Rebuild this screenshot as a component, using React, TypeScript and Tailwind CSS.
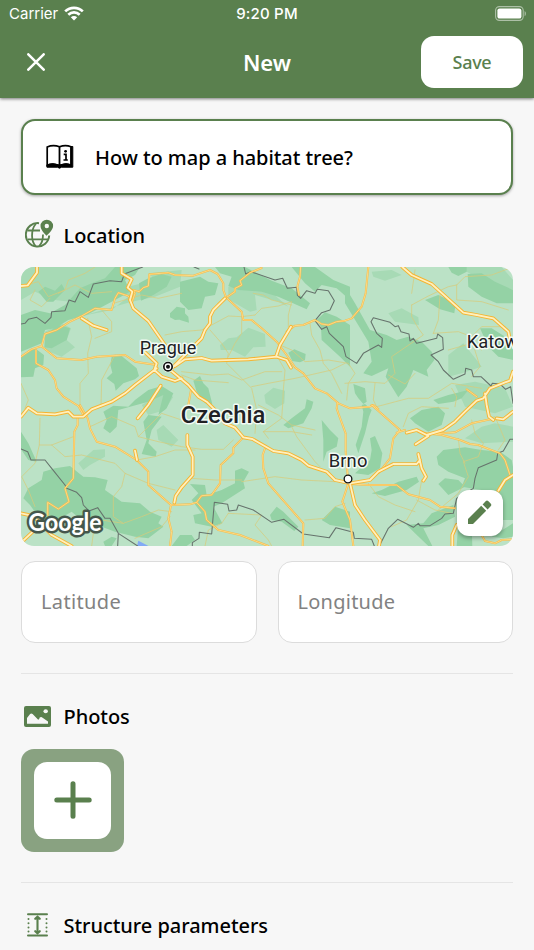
import React from 'react';

const FORESTS_LIGHT = [
  'M18 21L330 21L290 70L235 72L200 95L165 125L120 120L60 95L18 120Z',
  'M200 168L290 150L340 110L300 90L420 60L400 40L500 30L495 80L420 110L350 125Z',
  'M90 215L140 190L168 205L155 240L180 262L140 290L90 270Z',
  'M190 610L235 570L270 568L270 590L225 615L205 630Z',
  'M615 255L640 235L665 232L700 203L750 222L752 260L715 262L690 290L650 270L617 270Z',
  'M640 80L700 75L760 90L820 140L790 125L720 105L725 150L705 155L640 118Z',
  'M748 405L775 383L810 392L808 430L780 447L752 430Z',
  'M1070 35L1130 30L1160 45L1110 62L1075 50Z',
  'M1300 285L1345 250L1385 300L1400 320L1340 340L1300 350Z',
  'M1120 160L1160 145L1210 172L1212 195L1140 185Z',
  'M1320 375L1380 365L1470 385L1494 440L1440 460L1350 440Z',
  'M1350 535L1400 500L1440 490L1494 500L1494 545L1400 550Z',
  'M1330 21L1460 21L1494 60L1494 90L1400 60Z',
  'M425 510L445 495L490 540L470 560L430 540Z',
  'M380 435L440 400L475 410L450 450L400 465Z',
];

const FORESTS = [
  'M18 165L60 150L105 160L150 135L195 85L230 70L270 55L300 21L375 21L360 45L330 60L345 95L300 120L215 165L160 180L120 205L90 210L80 250L18 275Z',
  'M70 95L90 80L120 92L140 72L150 90L115 125L95 125Z',
  'M90 225L130 195L165 205L155 240L110 265L88 262Z',
  'M18 290L60 265L87 285L85 315L60 325L55 350L18 352Z',
  'M290 290L320 288L365 325L372 348L360 358L325 370L302 392L298 372L275 355L292 338L286 315Z',
  'M372 70L400 55L440 42L470 50L455 80L415 105L378 122Z',
  'M465 160L485 140L510 145L510 178L480 180L465 172Z',
  'M265 455L295 437L340 440L360 420L400 390L440 378L475 400L455 445L430 465L445 405L400 425L345 440L310 450L305 500L285 520L265 505L275 480Z',
  'M385 485L400 465L440 470L410 510L400 550L425 575L422 590L380 582L395 540Z',
  'M495 65L555 50L580 65L610 70L600 105L570 110L560 145L520 150L495 125Z',
  'M495 145L520 170L522 188L495 180Z',
  'M600 21L690 21L770 62L830 85L885 130L875 148L790 110L740 95L670 90L640 78L650 50L615 40Z',
  'M830 21L900 21L955 60L1005 80L1005 120L965 85L920 75L900 95L870 70Z',
  'M905 180L930 157L965 170L1005 195L1005 320L975 290L920 240L918 200Z',
  'M820 278L838 268L872 282L870 300L855 307L832 303Z',
  'M535 362L555 348L565 370L580 385L592 433L570 430L545 395Z',
  'M875 418L895 425L890 445L865 490L820 505L805 495L830 475L870 445Z',
  'M920 480L945 510L970 535L965 560L935 575L925 605L925 540Z',
  'M990 80L1020 130L1065 210L1115 225L1145 240L1180 230L1220 245L1250 275L1258 300L1235 330L1240 350L1195 330L1175 380L1150 412L1112 350L1120 325L1070 348L1045 340L1070 305L1060 245L990 130Z',
  'M1230 120L1270 105L1322 130L1318 160L1275 148Z',
  'M1300 21L1355 21L1355 35L1330 48L1310 38Z',
  'M1358 42L1400 40L1440 65L1494 90L1494 130L1445 130L1400 110L1360 80Z',
  'M1395 205L1430 205L1494 245L1494 300L1450 290L1420 260Z',
  'M1015 372L1050 385L1055 425L1045 432L1030 415L1020 400Z',
  'M1040 435L1050 432L1070 450L1062 470L1050 520L1030 580L1022 555L1040 500L1045 455Z',
  'M1065 535L1080 528L1102 580L1095 625L1060 645L1020 640L1065 600L1070 570Z',
  'M1185 475L1220 450L1270 440L1290 460L1280 495L1240 515L1200 490Z',
  'M1255 420L1300 405L1360 390L1340 415L1315 425L1270 432Z',
  'M1265 590L1285 570L1350 562L1400 570L1455 575L1490 600L1494 620L1494 780L1410 780L1400 690L1340 680L1350 655L1300 635L1270 615Z',
  'M1270 672L1290 655L1330 660L1350 680L1300 705Z',
  'M1070 700L1100 690L1150 665L1205 650L1212 665L1175 690L1110 708Z',
  'M1175 795L1225 790L1250 760L1315 735L1320 770L1270 795L1225 805L1252 858L1240 858L1200 820Z',
  'M1330 790L1370 790L1372 858L1325 858Z',
  'M1430 830L1494 790L1494 830L1465 835Z',
  'M18 515L40 550L65 605L40 600L18 568Z',
  'M40 685L80 660L85 635L120 625L165 618L205 650L240 652L278 660L270 690L320 725L375 730L405 755L440 770L430 790L445 800L400 835L360 830L300 815L260 800L210 790L170 755L110 790L70 770L45 735L25 715Z',
  'M265 845L290 830L305 835L290 858L270 858Z',
  'M660 632L680 625L702 635L685 665L690 685L620 730L595 740L622 790L590 800L540 790L535 765L560 760L530 720L550 700L525 672L570 675L575 705L620 690L660 670Z',
  'M765 765L785 740L805 755L850 800L838 813L800 785L770 780Z',
  'M920 780L960 740L1005 755L1005 805L945 795Z',
  'M495 825L530 825L540 840L515 858L470 858Z',
];

const MINOR_ROADS = [
  'M18 80L70 65L100 110L150 90L160 60L210 40L240 21',
  'M60 90L45 120L80 140L105 115',
  'M130 100L180 75L230 100L290 95',
  'M218 175L230 230L218 280L220 340L195 370L195 440',
  'M260 150L290 185L290 215L240 235',
  'M295 130L380 105L430 115L500 100',
  'M300 285L260 360L258 440',
  'M18 370L40 420L30 445',
  'M75 475L73 555L110 555L150 590L200 585L300 610L330 640L400 670L480 690',
  'M73 555L60 610L20 650L40 690L60 740',
  'M175 530L110 555M330 640L320 680L295 710L295 770L325 790',
  'M225 500L290 470L360 500L370 530L430 545L500 560L560 568L625 568L655 540',
  'M370 530L440 460L500 480M366 600L420 590L480 570L540 570',
  'M450 225L500 215L560 210L590 195L640 168L680 170L720 165',
  'M585 210L620 250L640 280L635 310L680 355L710 385L725 450L720 520',
  'M680 170L680 220L660 250L640 290',
  'M500 335L590 345L640 342L680 360L750 335L800 335',
  'M500 345L540 360L640 368M710 380L760 370L840 355L950 330L990 310',
  'M790 295L810 330L805 390L803 435L800 475L745 515L760 535',
  'M795 255L830 270L870 305L940 300L1000 310L1020 340L1000 370L995 420',
  'M720 165L740 145L790 138L830 125L820 165L820 200',
  'M715 100L745 105L770 120L830 135M885 190L890 225L915 270L925 310L950 340L980 400',
  'M745 515L830 515L890 525M830 500L845 530L900 605L915 620',
  'M680 665L780 650L860 660L960 665',
  'M730 435L790 465L830 495L900 510M530 655L600 660L680 660',
  'M640 760L620 790L580 810L570 858M640 760L740 765L720 795L760 840L770 858',
  'M870 780L930 775L960 740L990 730',
  'M1190 135L1190 170L1210 205L1225 225L1130 290L1140 340L1110 370L1050 365L990 370',
  'M1190 135L1240 108L1300 80L1325 75L1350 50L1430 45L1494 21',
  'M1325 75L1325 120L1400 125L1480 150',
  'M1200 30L1190 100M1275 105L1270 180L1255 220M1255 220L1330 215L1370 230L1400 200L1470 200',
  'M1300 270L1370 250L1400 270M1370 240L1395 320L1370 350',
  'M1120 345L1170 372L1200 340M1080 370L1075 420L1085 440L1180 415L1240 415L1310 370L1400 385',
  'M1165 500L1180 460L1220 440L1300 445M1320 440L1325 410L1310 385',
  'M1370 480L1380 520L1405 550L1390 590L1345 605L1360 650L1330 700L1270 750',
  'M1220 660L1210 720L1175 780L1130 800M1205 720L1260 750L1310 760M1060 670L1090 710L1140 735L1200 755',
  'M1330 535L1335 580L1350 610M1410 480L1440 470L1470 540L1450 570',
  'M260 780L325 790L380 770L430 750L470 755M360 835L440 800L465 770',
  'M215 790L235 820L230 858',
];

const MEDIUM_ROADS = [
  'M18 290L50 268L80 258L90 222L125 210L165 185L200 168L240 145L290 150L300 115L310 98L340 108L352 125',
  'M78 258L125 295L200 300L245 290L330 285L360 305L420 314',
  'M63 270L63 310L100 330L120 360L125 385L145 410L190 438L205 465',
  'M350 130L360 100L355 90L372 95L385 83L400 78L403 43L460 38L480 45L535 47L585 30L608 42L625 70L625 90L633 112L680 155L685 180L710 180L740 205L785 245L815 285L840 322L865 340L900 385L935 400L970 430L1005 445L1065 440L1075 435L1090 447',
  'M635 112L660 95L660 85L680 75L675 62L705 38L740 24',
  'M815 215L840 197L865 195L900 180L920 192L940 195L965 185L990 182L1010 175L1040 140L1052 100L1060 21',
  'M857 21L855 50L847 80L852 105',
  'M188 470L188 495L178 515L175 655L150 685L162 725L130 747L98 727L98 765',
  'M195 435L218 475L225 505L245 545L300 560L365 600L400 635L400 675L468 735L525 733L545 727L560 707L590 705L615 670L617 615L655 580L655 563L685 532',
  'M468 735L460 775L470 815L465 858',
  'M750 565L743 585L745 625L760 670L865 790L863 858',
  'M545 727L570 755L575 780L610 810L675 825L760 858',
  'M967 430L965 445L970 460L992 520L992 575L1000 670L982 725L1005 780L1015 858',
  'M1070 435L1155 510L1135 535L1125 595L1092 638M1145 518L1170 510',
  'M1005 672L1060 675L1145 675L1180 703L1245 720L1275 740L1320 745',
  'M1230 520L1280 525L1335 540L1365 552L1390 555L1455 580L1470 600L1485 645',
  'M1240 523L1320 517L1370 490L1430 477',
  'M1355 388L1385 410M520 435L528 390',
  'M1400 825L1410 843L1440 850L1460 840L1494 838',
];

const MAJOR_ROADS = [
  'M18 78L38 76L66 38L66 21',
  'M320 21L320 40L350 58L338 83L352 95L345 120L355 145L400 183L450 255L475 290',
  'M425 325L360 375L330 400L290 425L230 448L205 470L175 470L160 455L120 463L65 460L40 443L18 470',
  'M388 275L425 310L418 330L440 350L480 363L500 355',
  'M470 325L520 275L560 235L570 210L585 190L585 170L595 150L630 115',
  'M480 318L510 298L560 294L590 302L700 298L785 290L815 300L828 323M783 290L795 255L828 200',
  'M460 325L520 375L550 410L575 425L605 455L630 490L660 503L685 532L712 537L775 573L820 580L860 600L880 617L935 635L960 660L1005 670L1065 660L1090 635L1135 612L1205 612L1215 600',
  'M1005 670L1020 735L1050 780L1095 840L1092 858',
  'M1210 582L1220 625L1233 650L1225 662',
  'M1175 518L1205 510L1235 525L1285 510L1320 485L1350 455L1385 422L1405 415L1425 385L1470 367L1485 362L1494 335',
  'M1202 553L1240 528',
  'M1162 21L1190 45L1250 72L1345 158L1385 165L1435 175L1480 215L1485 240',
  'M1410 400L1415 435L1422 470L1435 480M1445 475L1465 478L1494 455',
  'M18 760L55 768L110 825L170 858M18 848L75 795',
  'M478 728L482 708L500 682L533 645L533 590L517 555L517 525',
  'M200 175L235 197L275 210',
  'M437 377L400 435L368 475',
  'M360 572L366 600',
  'M1494 645L1470 660L1450 692M1325 795L1312 825L1312 858',
];

const BORDERS = [
  'M18 192L30 190L40 178L65 172L90 190L108 172L110 155L150 152L162 120L180 126L195 95L220 112L235 72L285 62L320 65L328 42L383 21',
  'M537 21L552 27M687 21L692 42L707 35L780 60L803 55L817 85L845 82L847 105L857 115L875 92L900 100L907 88L940 92L958 122L945 150L920 158L900 182L920 208L935 200L943 220L985 260L993 290L1025 310L1045 280L1090 255L1100 262L1102 235L1085 220L1068 185L1075 173L1125 187L1140 200L1150 197L1158 215L1182 222L1185 243L1195 235L1205 250L1265 235L1268 222L1283 233L1285 268L1248 285L1270 305L1285 330L1315 358L1350 342L1352 325L1370 330L1375 350L1398 350L1428 378L1432 370L1455 372L1472 388L1487 380L1494 430',
  'M18 567L38 575L48 600L90 600L110 625L150 675L155 685L185 697L200 713L205 735L222 753L248 743L270 775L285 775L310 820L368 858M310 820L308 858',
  'M532 858L532 848L552 835L553 817L590 822L598 727L638 733L642 753L665 750L670 735L715 750L770 787L807 778L865 822L943 833L963 803L1015 817L1018 835L1070 838L1078 858',
  'M1093 858L1120 805L1148 778L1195 802L1210 790L1215 797L1245 797L1280 775L1290 762L1315 760L1325 715L1375 685L1380 655L1390 623L1445 600L1448 580L1465 573L1485 538L1494 538',
];

const MAP_LABEL = 'fill-[#202124] stroke-[#f3fbf5] [stroke-linejoin:round] [paint-order:stroke]';

const CzechiaMap: React.FC = () => (
  <svg className="block h-full w-full" viewBox="18 21 1476 837" preserveAspectRatio="none" fill="none">
    <rect x="18" y="21" width="1476" height="837" fill="#bbe2c6" />
    <path d={FORESTS_LIGHT.join('')} fill="#a7dab5" />
    <path d={FORESTS.join('')} fill="#94d2a5" />
    <path d="M366 858L370 842L395 855L400 858Z" fill="#82aaf5" />
    <g strokeLinejoin="round" strokeLinecap="round">
      <path d={MINOR_ROADS.join('')} stroke="#d8cb7b" strokeWidth="2.6" opacity="0.85" />
      <path d={BORDERS.join('')} stroke="#66736c" strokeWidth="3.2" />
      <path d={MEDIUM_ROADS.join('')} stroke="#f3bd50" strokeWidth="6" />
      <path d={MEDIUM_ROADS.join('')} stroke="#ffdf8c" strokeWidth="2.5" />
      <path d={MAJOR_ROADS.join('')} stroke="#f5b432" strokeWidth="11" />
      <path d={MAJOR_ROADS.join('')} stroke="#fff0bd" strokeWidth="5.5" />
    </g>

    {/* City markers */}
    <circle cx="459" cy="320" r="17" fill="#e6f5ea" />
    <circle cx="459" cy="320" r="12.5" fill="#fff" stroke="#111" strokeWidth="5" />
    <circle cx="459" cy="320" r="6" fill="#111" />
    <circle cx="999" cy="657" r="11.5" fill="#fff" stroke="#111" strokeWidth="4" />

    <g fontFamily="Roboto, sans-serif" strokeWidth="9">
      <text className={MAP_LABEL} x="374" y="281" fontSize="54" textLength="170">Prague</text>
      <text className={MAP_LABEL} x="497" y="489" fontSize="71" fontWeight="500" textLength="254" lengthAdjust="spacingAndGlyphs">Czechia</text>
      <text className={MAP_LABEL} x="941" y="620" fontSize="55" textLength="116">Brno</text>
      <text className={MAP_LABEL} x="1355" y="265" fontSize="55">Katowice</text>
    </g>
    <text
      x="40" y="813" fontSize="73" fontWeight="700" fontFamily="Lato, sans-serif" textLength="220" lengthAdjust="spacingAndGlyphs"
      className="fill-white stroke-[#45574b] [stroke-linejoin:round] [paint-order:stroke]" strokeWidth="15"
    >
      Google
    </text>
  </svg>
);

const WifiIcon = () => (
  <svg className="h-[15px] w-5" viewBox="0 0 20 15" fill="none" stroke="#fff" strokeWidth="2.7">
    <path d="M1.2 5.4C6.2 .6 13.8 .6 18.8 5.4" />
    <path d="M4.3 8.7C7.6 5.6 12.4 5.6 15.7 8.7" />
    <path d="M6.8 11.2C8.7 9.5 11.3 9.5 13.2 11.2L10 14.5Z" fill="#fff" stroke="none" />
  </svg>
);

const BatteryIcon = () => (
  <svg className="h-[15px] w-8" viewBox="0 0 32 15" fill="none">
    <rect x=".6" y=".6" width="27.6" height="13.8" rx="3.8" stroke="#fff" strokeOpacity=".5" strokeWidth="1.1" />
    <rect x="2.4" y="2.4" width="24" height="10.2" rx="2.2" fill="#fff" />
    <path d="M29.6 5V10.2C31.3 9.5 31.3 5.7 29.6 5Z" fill="#fff" fillOpacity=".5" />
  </svg>
);

const GuideIcon = () => (
  <svg className="h-[26px] w-7" viewBox="0 0 28 26" fill="none" stroke="#000">
    <path d="M1.2 3Q7 .6 13.5 2.7Q19.5 .6 25 2.7V21.2Q19.5 18.7 13.5 22Q7 18.7 1.2 21.2Z" strokeWidth="1.7" />
    <path d="M13.5 2.5V22" strokeWidth="1.8" />
    <path d="M25 2.5H26.8V23.2H15.5Q13.5 25.2 11.5 23.2H.9V20.8Q7 18.6 13.5 21Q20 18.6 25 20.8Z" fill="#000" strokeWidth="1" />
    <circle cx="19.6" cy="7.3" r="1.4" fill="#000" stroke="none" />
    <path d="M17.7 10.3H20V15.6M17.5 16H21.8" strokeWidth="1.7" />
  </svg>
);

const GlobePinIcon = () => (
  <svg className="h-[30px] w-[30px]" viewBox="0 0 30 30" fill="none" stroke="#5a804e" strokeWidth="1.8">
    <path d="M14 4.2A11.7 11.7 0 1 0 24.2 16.5" strokeWidth="2" />
    <path d="M10.8 4.8C5.8 11 5.8 22 10.8 27.2M14.2 27.2C17.2 24 18 20 18 15.5" />
    <path d="M2.6 11.5H15M2.6 20.3H23.4" />
    <path d="M21.8 .7A6.3 6.3 0 0 0 15.5 7C15.5 11.3 21.5 16.8 21.5 16.8C21.5 16.8 28.1 11.3 28.1 7A6.3 6.3 0 0 0 21.8 .7Z" fill="#5a804e" stroke="none" />
    <circle cx="21.8" cy="7" r="2.2" fill="#f7f7f7" stroke="none" />
  </svg>
);

const PhotoIcon = () => (
  <svg className="h-[21px] w-[27px]" viewBox="0 0 27 22" preserveAspectRatio="none">
    <rect width="27" height="22" rx="2" fill="#5a804e" />
    <circle cx="21.7" cy="5.5" r="2.2" fill="#f7f7f7" />
    <path d="M3 18.7V12.5L6.1 8.5Q7.3 7.2 8.6 8.5L14.2 14.4Q15.6 14 15.5 12.3Q17 10.7 18.6 12.2L24 16.3V18.7Z" fill="#f7f7f7" />
  </svg>
);

const HeightIcon = () => (
  <svg className="h-6 w-[21px]" viewBox="0 0 21 24" fill="none" stroke="#5a804e" strokeWidth="2" strokeLinecap="round">
    <path d="M1 1.2H20M1 22.6H20" />
    <path d="M10.5 4V20M8.2 5.8L10.5 3.7L12.8 5.8M8.2 18.2L10.5 20.3L12.8 18.2" strokeWidth="2.1" />
    <path d="M1.5 6V19.5M19.5 6V19.5" strokeWidth="2" strokeDasharray="0 4.2" />
  </svg>
);

interface SectionTitleProps {
  icon: React.ReactNode;
  title: string;
}

const SectionTitle: React.FC<SectionTitleProps> = ({ icon, title }) => (
  <div className="flex h-8 items-center">
    <div className="flex w-[33px] shrink-0 justify-center">{icon}</div>
    <h2 className="ml-[9.5px] whitespace-nowrap pt-px text-[20px] font-medium leading-8 tracking-[-0.05px] text-black">{title}</h2>
  </div>
);

export default function App() {
  return (
    <div className="h-[950px] w-[534px] overflow-hidden bg-[#f7f7f7] font-['Noto_Sans',sans-serif]">
      {/* Header */}
      <header className="relative h-[98px] bg-[#5a804e] text-white shadow-[0_1px_3px_rgba(0,0,0,0.5)]">
        <div className="grid h-[27px] grid-cols-3 items-center px-[7px] font-['Inter',sans-serif]">
          <div className="flex items-center gap-1.5 pl-0.5">
            <span className="pt-0.5 text-[15px]">Carrier</span>
            <WifiIcon />
          </div>
          <span className="pt-0.5 text-center text-[15px] font-medium tracking-[0.2px]">9:20 PM</span>
          <div className="flex justify-end">
            <BatteryIcon />
          </div>
        </div>
        <div className="grid h-[70px] grid-cols-3 items-center pl-[11px] pr-[11px]">
          <svg className="ml-4 h-[18px] w-[18px]" viewBox="0 0 18 18" stroke="#fff" strokeWidth="2.5" strokeLinecap="round">
            <path d="M1.3 1.3L16.7 16.7M16.7 1.3L1.3 16.7" />
          </svg>
          <h1 className="pt-px text-center text-[22px] font-semibold">New</h1>
          <button className="h-[52px] w-[102px] justify-self-end rounded-[13px] bg-white text-[18px] font-medium tracking-[-0.3px] text-[#5a804e]">
            Save
          </button>
        </div>
      </header>

      <main className="px-[21px] pt-[21px]">
        <button className="flex h-[76px] w-full items-center rounded-[14px] border-2 border-[#5a804e] bg-white pl-[23px] shadow-[0_1px_3px_rgba(0,0,0,0.35)]">
          <GuideIcon />
          <span className="ml-[21px] whitespace-nowrap pt-0.5 text-[20px] font-medium tracking-[-0.05px] text-black">How to map a habitat tree?</span>
        </button>

        {/* Location */}
        <section className="mt-6">
          <SectionTitle icon={<div className="-mt-0.5 ml-1"><GlobePinIcon /></div>} title="Location" />
          <div className="relative mt-4 h-[279px] overflow-hidden rounded-[13px]">
            <CzechiaMap />
            <button className="absolute bottom-[10.5px] right-[10.5px] flex h-[46px] w-[46px] items-center justify-center rounded-[12px] bg-white shadow-[0_2px_4px_rgba(0,0,0,0.35)]">
              <svg className="h-[25px] w-[25px]" viewBox="0 0 25 25" fill="#5a804e">
                <path d="M1 19V24H6L19.2 10.8L14.2 5.8Z" />
                <path d="M15.6 4.4L18.9 1.1Q20 .1 21.2 1.1L23.9 3.8Q24.9 5 23.9 6.1L20.6 9.4Z" />
              </svg>
            </button>
          </div>
          <div className="mt-[15px] grid grid-cols-2 gap-[21px]">
            <div className="flex h-[82px] items-center rounded-[14px] border border-[#dcdcdc] bg-white pl-[19px] text-[20px] tracking-[0.35px] text-[#828282]">
              <span>Latitude</span>
            </div>
            <div className="flex h-[82px] items-center rounded-[14px] border border-[#dcdcdc] bg-white pl-[19px] text-[20px] tracking-[0.25px] text-[#828282]">
              <span>Longitude</span>
            </div>
          </div>
        </section>

        {/* Photos */}
        <section className="mt-[30px] border-t border-[#e5e5e5] pt-[26px]">
          <SectionTitle icon={<PhotoIcon />} title="Photos" />
          <button className="mt-[16.5px] flex h-[103px] w-[103px] items-center justify-center rounded-[13px] bg-[#89a281]">
            <span className="flex h-[77px] w-[77px] items-center justify-center rounded-[13px] bg-white">
              <svg className="h-[38px] w-[38px]" viewBox="0 0 38 38" stroke="#5a804e" strokeWidth="5" strokeLinecap="round">
                <path d="M19 2.8V35.2M2.8 19H35.2" />
              </svg>
            </span>
          </button>
        </section>

        {/* Structure parameters */}
        <section className="mt-[30.5px] border-t border-[#e5e5e5] pt-[26px]">
          <SectionTitle icon={<HeightIcon />} title="Structure parameters" />
        </section>
      </main>
    </div>
  );
}
